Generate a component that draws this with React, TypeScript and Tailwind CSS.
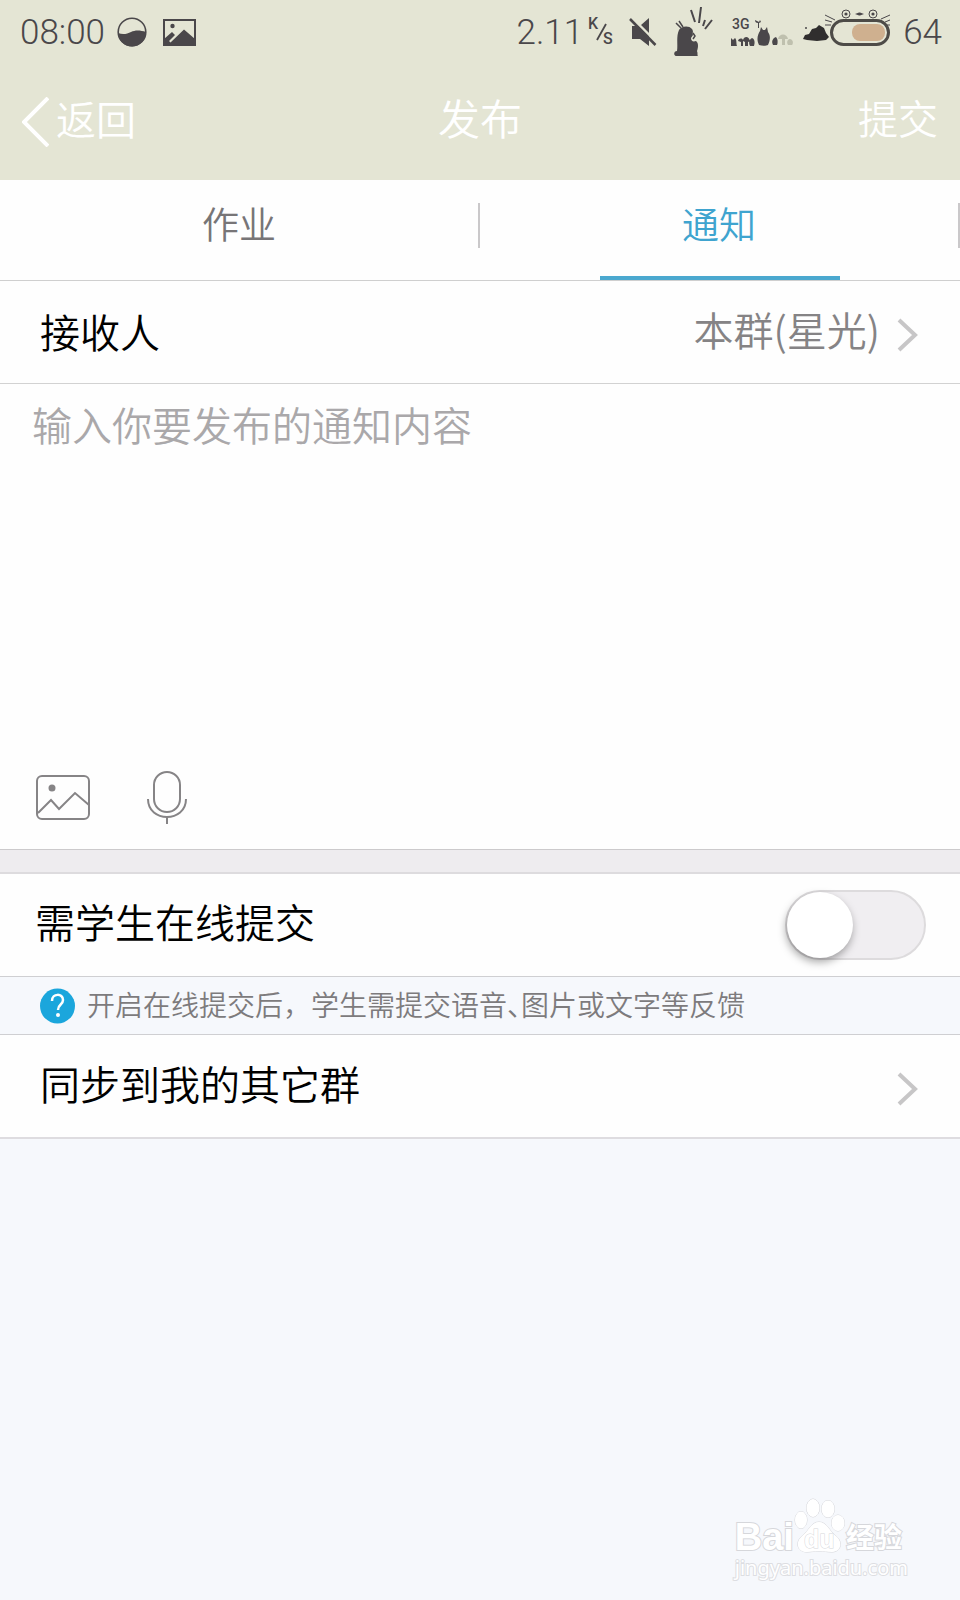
import { useState } from 'react';

const tabs = [
  { id: 'homework', label: '作业' },
  { id: 'notice', label: '通知' },
];

function BallIcon() {
  return (
    <svg width="30" height="30" viewBox="0 0 30 30" aria-hidden="true">
      <circle cx="15" cy="15" r="13.8" fill="none" stroke="#4a474a" strokeWidth="1.600" />
      <path d="M1 16c5 2 9 1 13-1s9-2 15 0a14 14 0 0 1-28 1z" fill="#4a474a" />
    </svg>
  );
}

function PhotoIcon() {
  return (
    <svg width="33" height="27" viewBox="0 0 33 27" aria-hidden="true">
      <rect x="1" y="1" width="31" height="25" fill="none" stroke="#4a474a" strokeWidth="2" />
      <circle cx="9.500" cy="7" r="2.200" fill="#4a474a" />
      <path d="M1 26v-6l8-7 3 3-6 6 1.500 1.500L21 10.500 32 20v6z" fill="#4a474a" />
    </svg>
  );
}

function SpeedUnit() {
  return (
    <svg width="30" height="40" viewBox="0 0 30 40" fill="#4a474a" className="font-[Roboto] text-[16px] font-medium">
      <text x="1" y="17">K</text>
      <path d="M19 12 10 28" stroke="#4a474a" strokeWidth="1.800" />
      <text x="16" y="32">S</text>
    </svg>
  );
}

function MuteIcon() {
  return (
    <svg width="28" height="30" viewBox="0 0 28 30" aria-hidden="true">
      <path d="M3 9h7l10 9v11l-9-7H3zM12 8l8-7v15z" fill="#4a474a" />
      <path d="M3 1 28 26" stroke="#e4e5d4" strokeWidth="2" />
      <path d="M1 2 26.500 28" stroke="#4a474a" strokeWidth="2.500" />
    </svg>
  );
}

function TotoroIcon() {
  return (
    <svg width="40" height="52" viewBox="0 0 40 52" aria-hidden="true">
      <path
        d="M2 50c-3-1-2-5 1-5 1-6-1-15 2-21 2-4 10-5 13-1 2 3 0 4 1 6l-2 3c0 3 2 4 5 3 3 2 2 7 1 10 1 2 0 4 1 5z"
        fill="#4a474a"
      />
      <path d="m19 27 2 3-2 3" fill="none" stroke="#4a474a" strokeWidth="1.500" />
      <path d="m2 17 5 5M5 15l4 6" stroke="#4a474a" strokeWidth="1.500" />
      <path d="m17 4 4 12M27 1l-2 16M31 14l-2 6M38 14l-7 9" stroke="#4a474a" strokeWidth="2" />
    </svg>
  );
}

function SignalIcon() {
  return (
    <svg width="62" height="34" viewBox="0 -4 62 34" fill="#4a474a" className="font-[Roboto] text-[14px] font-medium">
      <text x="1" y="10">3G</text>
      <path d="M0 27V19l2 2 2-2c2 2 1 5 2 8zM7 22c1-3 4-3 5-1 1-4 6-4 7 1l-2 1v4h-3v-4l-2-1v5h-2v-4zM19 27c-2-4 0-7 2-8 3 1 3 5 2 8z" />
      <path d="M28 26c-3-6-1-11 1-14l1-4 2 3h2l2-3 1 5c3 4 2 9 0 13-2 1-6 1-9 0z" />
      <path d="m24 1 4 2 1-2 1 2-2 1v5h-1V4c-2 0-3-1-3-3z" />
      <path d="M42 26c-2-4 0-7 3-8 2 2 2 6 1 8z" />
      <path d="M47 20c1-6 9-6 10 0h-3v6h-3v-6zM57 26c-2-3 0-6 2-6 4 1 3 5 2 6z" fill="#bfc0ae" />
    </svg>
  );
}

function BatteryIcon() {
  return (
    <svg width="88" height="38" viewBox="0 0 88 38" aria-hidden="true">
      <path d="M0 30l2-4 4-1 3-5 4-1 3-3 5 3 2 5 3 4-3 3-9 1-10-1z" fill="#302e2e" />
      <circle cx="3" cy="19" r="1" fill="#4a474a" />
      <rect x="28.500" y="11.500" width="57" height="24" rx="12" fill="none" stroke="#4d4b47" strokeWidth="3" />
      <rect x="49" y="15" width="33" height="17" rx="8" fill="#cfb08f" />
      <g fill="none" stroke="#4a474a">
        <circle cx="43" cy="5" r="4" />
        <circle cx="70" cy="5" r="4" />
        <path d="m22 6 10 5M22 11l7 2M22 16h6M87 6l-9 4M87 11l-5 2M87 16h-3" />
      </g>
      <circle cx="43" cy="5" r="1.600" fill="#4a474a" />
      <circle cx="70" cy="5" r="1.600" fill="#4a474a" />
      <path d="m52 5 4-1.500h1L61 5l-4 1.500h-1z" fill="#4a474a" />
    </svg>
  );
}

function StatusBar() {
  return (
    <div className="flex h-16 items-center pr-[18px] pl-5 font-[Roboto] text-[35px] leading-none font-light text-[#4a474a]">
      <span>08:00</span>
      <div className="ml-3 flex items-center gap-4">
        <BallIcon />
        <PhotoIcon />
      </div>
      <div className="ml-auto flex items-center">
        <span className="mr-1">2.11</span>
        <SpeedUnit />
        <div className="mr-2.5 ml-3 flex items-center gap-[17px]">
          <MuteIcon />
          <TotoroIcon />
          <SignalIcon />
        </div>
        <div className="mb-2">
          <BatteryIcon />
        </div>
        <span className="ml-3">64</span>
      </div>
    </div>
  );
}

function Chevron() {
  return (
    <svg width="22" height="34" viewBox="0 0 22 34" fill="none" className="mt-1.5" aria-hidden="true">
      <path d="m2 2 16 15L2 32" stroke="#c7c6c7" strokeWidth="4" />
    </svg>
  );
}

function Watermark() {
  return (
    <div className="mt-auto flex justify-end pr-[52px] pb-[18px] text-white [paint-order:stroke_fill]">
      <div>
        <div className="flex h-14 items-end [-webkit-text-stroke:2px_#d6d7db]">
          <span className="font-['Liberation_Sans'] text-[38px] leading-[34px] font-bold">Bai</span>
          <svg width="52" height="56" viewBox="0 0 52 56" fill="#fff" stroke="#d6d7db">
            <ellipse cx="7" cy="22" rx="6" ry="8.500" />
            <ellipse cx="19" cy="10" rx="6.500" ry="9" />
            <ellipse cx="34" cy="11" rx="6.500" ry="8.500" />
            <ellipse cx="44" cy="25" rx="6.500" ry="8" />
            <path d="M25 24c8 0 10 9 17 14 8 7 4 16-4 16-5 0-8-1-13-1s-8 1-12 1c-10 0-12-10-5-16 7-5 9-14 17-14z" />
            <text x="10" y="50" className="font-['Liberation_Sans'] text-[25px] font-bold [-webkit-text-stroke:3px_#cfd0d4]">
              du
            </text>
          </svg>
          <span className="font-['Noto_Sans_CJK_SC',sans-serif] text-[28px] leading-9 font-bold">经验</span>
        </div>
        <p className="font-['Noto_Sans'] text-[20px] leading-7 font-normal [-webkit-text-stroke:2px_#dddee2]">
          jingyan.baidu.com
        </p>
      </div>
    </div>
  );
}

export default function App() {
  const [active, setActive] = useState('notice');
  const [content, setContent] = useState('');
  const [online, setOnline] = useState(false);

  return (
    <div className="flex min-h-screen flex-col bg-[#f6f8fc] font-['Noto_Sans_CJK_SC',sans-serif] text-[40px] leading-[48px] font-[350] text-black">
      {/* Header */}
      <header className="h-[180px] bg-[#e4e5d4]">
        <StatusBar />
        <div className="grid h-28 grid-cols-3 items-center px-[22px] text-white">
          <button type="button" className="flex items-center gap-[7px] justify-self-start">
            <svg width="27" height="50" viewBox="0 0 27 50" fill="none" className="mt-1" aria-hidden="true">
              <path d="M26 1 2 25l24 24" stroke="#fff" strokeWidth="4" />
            </svg>
            <span className="pb-1">返回</span>
          </button>
          <h1 className="pb-1.5 text-center text-[42px]">发布</h1>
          <button type="button" className="justify-self-end pb-1.5">提交</button>
        </div>
      </header>

      {/* Tabs */}
      <div role="tablist" className="flex h-[101px] border-b border-[#cfcfcf] bg-[#fefefe]">
        {tabs.map((tab) => (
          <button
            key={tab.id}
            type="button"
            role="tab"
            aria-selected={active === tab.id}
            onClick={() => setActive(tab.id)}
            className={`flex flex-1 flex-col justify-between text-[37px] leading-10 ${
              active === tab.id ? 'text-[#3fa4cf]' : 'text-[#777577]'
            }`}
          >
            <span className="mt-[23px] w-full border-r-2 border-[#cac8ca] pb-[5px]">{tab.label}</span>
            <span className={`h-1 w-1/2 self-center ${active === tab.id ? 'bg-[#4aa8cf]' : ''}`} />
          </button>
        ))}
      </div>

      {/* Receiver */}
      <button type="button" className="flex h-[103px] items-center border-b border-[#d2d2d2] bg-[#fefefe] pr-[41px] pl-10">
        <span className="pb-0.5">接收人</span>
        <span className="mr-[17px] ml-auto pb-1.5 text-[#858385]">本群(星光)</span>
        <Chevron />
      </button>

      {/* Content */}
      <div className="flex h-[466px] flex-col border-b border-[#cccacc] bg-[#fefefe]">
        <textarea
          aria-label="通知内容"
          placeholder="输入你要发布的通知内容"
          value={content}
          onChange={(e) => setContent(e.target.value)}
          className="flex-1 resize-none px-8 pt-4 outline-none placeholder:text-[#aaa8aa]"
        />
        <div className="flex items-center gap-14 px-[35px] pb-[25px]">
          <button type="button" aria-label="图片">
            <svg width="55" height="54" viewBox="0 0 55 54" fill="none" stroke="#868486" strokeWidth="2">
              <rect x="2" y="6" width="52" height="43" rx="5" />
              <path d="m3 43 13-13 8 9 16-16 14 12" />
              <circle cx="17" cy="18" r="2.500" fill="#868486" />
            </svg>
          </button>
          <button type="button" aria-label="语音">
            <svg width="42" height="54" viewBox="0 0 42 54" fill="none" stroke="#868486" strokeWidth="2">
              <rect x="8" y="2" width="26" height="40" rx="13" />
              <path d="M2 29c0 24 38 24 38 0M21 47v7" />
            </svg>
          </button>
        </div>
      </div>
      <div className="h-6 border-b-2 border-[#dddbde] bg-[#eeecef]" />

      {/* Online submission */}
      <div className="flex h-[103px] items-center justify-between border-b border-[#cfcfd2] bg-[#fefefe] pr-[34px] pl-[35px]">
        <label htmlFor="online" className="pb-2">需学生在线提交</label>
        <input
          id="online"
          type="checkbox"
          role="switch"
          checked={online}
          onChange={(e) => setOnline(e.target.checked)}
          className="h-[70px] w-[141px] appearance-none rounded-full border-2 border-[#dddbdd] bg-[#f0eef1] before:block before:size-[66px] before:rounded-full before:bg-white before:shadow-[-1px_4px_8px_rgba(0,0,0,0.35)] checked:bg-[#4aa8cf] checked:before:ml-auto"
        />
      </div>
      <div className="flex h-[58px] items-center gap-3 border-b border-[#cfcfd2] px-10 text-[28px] leading-9 text-[#7d7b7d]">
        <svg width="35" height="36" viewBox="0 0 35 36" aria-hidden="true">
          <circle cx="17.500" cy="18" r="17.500" fill="#1ba6dc" />
          <path d="M12 13c0-8 11-8 11-1 0 5-5 4-5 10" fill="none" stroke="#fff" strokeWidth="2.500" />
          <circle cx="18" cy="27" r="2" fill="#fff" />
        </svg>
        <p className="pb-1">
          开启在线提交后，学生需提交语音<span className="[font-feature-settings:'halt']">、</span>图片或文字等反馈
        </p>
      </div>

      {/* Sync to other groups */}
      <button type="button" className="flex h-[104px] items-center justify-between border-b-2 border-[#dedce0] bg-[#fefefe] pr-[41px] pl-10">
        <span className="pb-1.5">同步到我的其它群</span>
        <Chevron />
      </button>

      <Watermark />
    </div>
  );
}
